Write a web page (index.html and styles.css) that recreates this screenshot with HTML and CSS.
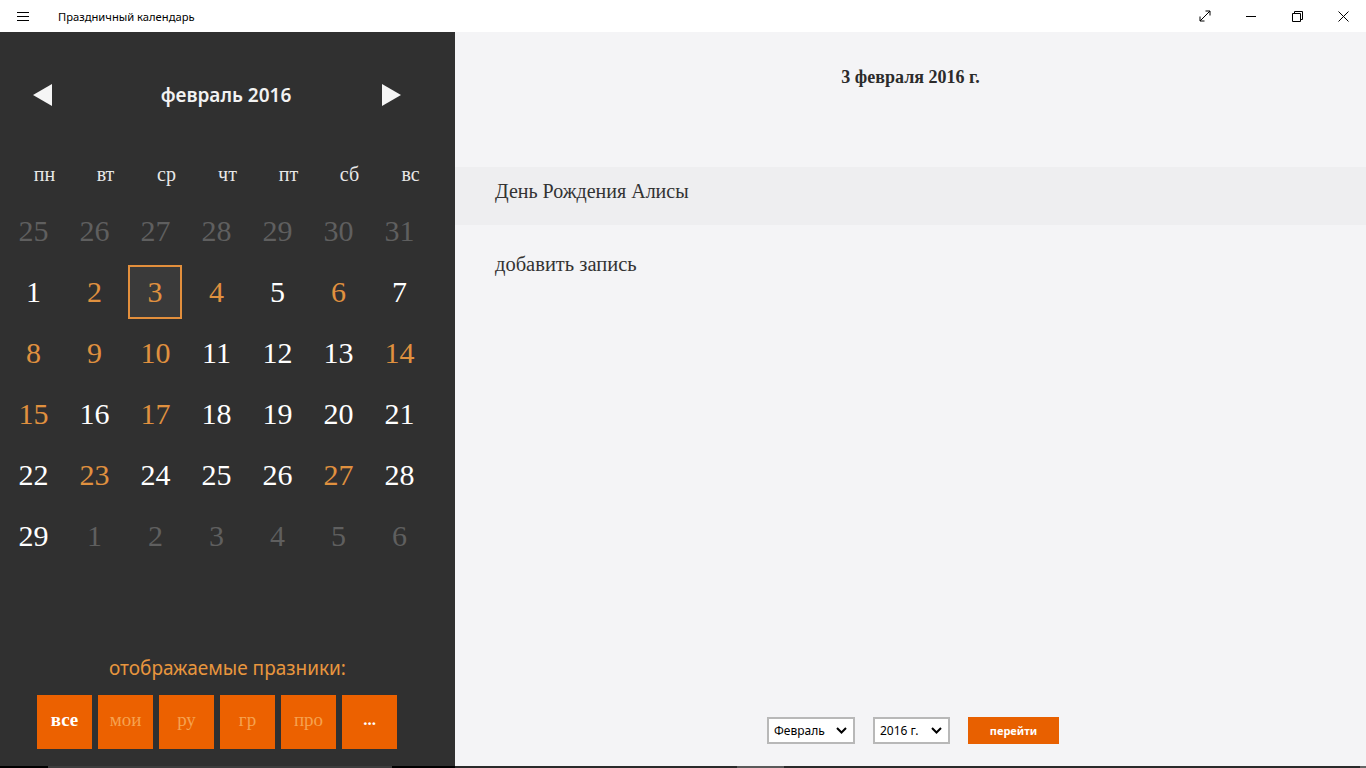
FILE: index.html
```html
<!DOCTYPE html>
<html lang="ru">
<head>
<meta charset="utf-8">
<title>Праздничный календарь</title>
<link rel="stylesheet" href="styles.css">
</head>
<body>
<div class="app">
  <header class="titlebar">
    <div class="hamburger"><span></span><span></span><span></span></div>
    <div class="app-title">Праздничный календарь</div>
    <div class="win-controls">
      <div class="wc">
        <svg width="12" height="12" viewBox="0 0 12 12"><path d="M1 11 L11 1 M6.5 1 H11 V5.5 M1 6.5 V11 H5.5" fill="none" stroke="#000" stroke-width="1"/></svg>
      </div>
      <div class="wc">
        <svg width="11" height="11" viewBox="0 0 11 11"><path d="M0 5.5 H10" stroke="#000" stroke-width="1"/></svg>
      </div>
      <div class="wc">
        <svg width="11" height="11" viewBox="0 0 11 11"><path d="M0.5 2.5 H8.5 V10.5 H0.5 Z M2.5 2.5 V0.5 H10.5 V8.5 H8.5" fill="none" stroke="#000" stroke-width="1"/></svg>
      </div>
      <div class="wc">
        <svg width="11" height="11" viewBox="0 0 11 11"><path d="M0.5 0.5 L10.5 10.5 M10.5 0.5 L0.5 10.5" stroke="#000" stroke-width="1"/></svg>
      </div>
    </div>
  </header>
  <main class="main">
    <aside class="cal">
      <div class="cal-head">
        <svg class="arrow" width="20" height="22" viewBox="0 0 20 22"><polygon points="19,0 19,22 0,11" fill="#f5f5f5"/></svg>
        <div class="month">февраль 2016</div>
        <svg class="arrow" width="20" height="22" viewBox="0 0 20 22"><polygon points="1,0 1,22 20,11" fill="#f5f5f5"/></svg>
      </div>
      <div class="weekdays">
        <span>пн</span><span>вт</span><span>ср</span><span>чт</span><span>пт</span><span>сб</span><span>вс</span>
      </div>
      <div class="days">
        <span class="d other">25</span><span class="d other">26</span><span class="d other">27</span><span class="d other">28</span><span class="d other">29</span><span class="d other">30</span><span class="d other">31</span>
        <span class="d">1</span><span class="d hol">2</span><span class="d hol cur">3</span><span class="d hol">4</span><span class="d">5</span><span class="d hol">6</span><span class="d">7</span>
        <span class="d hol">8</span><span class="d hol">9</span><span class="d hol">10</span><span class="d">11</span><span class="d">12</span><span class="d">13</span><span class="d hol">14</span>
        <span class="d hol">15</span><span class="d">16</span><span class="d hol">17</span><span class="d">18</span><span class="d">19</span><span class="d">20</span><span class="d">21</span>
        <span class="d">22</span><span class="d hol">23</span><span class="d">24</span><span class="d">25</span><span class="d">26</span><span class="d hol">27</span><span class="d">28</span>
        <span class="d">29</span><span class="d other">1</span><span class="d other">2</span><span class="d other">3</span><span class="d other">4</span><span class="d other">5</span><span class="d other">6</span>
      </div>
      <div class="filters">
        <div class="filters-label">отображаемые празники:</div>
        <div class="filter-btns">
          <button class="fb active">все</button>
          <button class="fb">мои</button>
          <button class="fb">ру</button>
          <button class="fb">гр</button>
          <button class="fb">про</button>
          <button class="fb more">...</button>
        </div>
      </div>
    </aside>
    <section class="day">
      <h1 class="day-title">3 февраля 2016 г.</h1>
      <div class="events">
        <div class="event">День Рождения Алисы</div>
        <div class="add">добавить запись</div>
      </div>
      <div class="goto">
        <div class="dd dd-month"><span>Февраль</span><svg width="11" height="7" viewBox="0 0 11 7"><polyline points="1,1 5.5,5.5 10,1" fill="none" stroke="#000" stroke-width="2"/></svg></div>
        <div class="dd dd-year"><span>2016 г.</span><svg width="11" height="7" viewBox="0 0 11 7"><polyline points="1,1 5.5,5.5 10,1" fill="none" stroke="#000" stroke-width="2"/></svg></div>
        <button class="go">перейти</button>
      </div>
    </section>
  </main>
  <div class="strip">
    <div class="strip-left">
      <span class="s-black s-a"></span><span class="s-grey s-b"></span><span class="s-black s-c"></span>
    </div>
    <div class="strip-right">
      <span class="s-dark s-d"></span><span class="s-thumb"></span><span class="s-dark s-e"></span><span class="s-end"></span>
    </div>
  </div>
</div>
</body>
</html>
```
FILE: styles.css
```css
* { box-sizing: border-box; margin: 0; padding: 0; }
html, body { width: 1366px; height: 768px; overflow: hidden; }
body { font-family: "Noto Sans", "Open Sans", sans-serif; background: #f4f4f6; color: #000; }

.app { display: flex; flex-direction: column; height: 768px; }

/* title bar */
.titlebar { height: 32px; flex: none; background: #fff; display: flex; align-items: center; }
.hamburger { width: 46px; height: 32px; display: flex; flex-direction: column; justify-content: center; align-items: center; gap: 3px; }
.hamburger span { display: block; width: 12px; height: 1px; background: #000; }
.app-title { margin-left: 12px; font-size: 11.2px; color: #000; }
.win-controls { margin-left: auto; display: flex; }
.wc { width: 46px; height: 32px; display: flex; align-items: center; justify-content: center; }

/* main */
.main { flex: 1; display: flex; min-height: 0; }

/* calendar panel */
.cal { width: 455px; flex: none; background: #303030; display: flex; flex-direction: column; }
.cal-head { margin-top: 43px; height: 40px; display: flex; align-items: center; padding: 0 54px 0 33px; }
.arrow { flex: none; display: block; }
.month { flex: 1; text-align: center; padding-left: 18px; font-size: 19px; font-weight: 600; color: #f2f2f2; }

.weekdays { margin-top: 45px; margin-left: 14px; height: 30px; display: grid; grid-template-columns: repeat(7, 61px); align-items: center; font-family: "Liberation Serif", serif; font-size: 20px; color: #e8e8e8; padding-bottom: 2px; }
.weekdays span { text-align: center; }

.days { margin-top: 10px; margin-left: 3px; display: grid; grid-template-columns: repeat(7, 61px); grid-auto-rows: 61px; font-family: "Liberation Serif", serif; font-size: 30px; color: #fff; }
.d { display: flex; align-items: center; justify-content: center; }
.d.other { color: #5f5f5f; }
.d.hol { color: #e0913f; }
.d.cur { margin: 4px 4px 3px 3px; border: 2px solid #e38f3c; background: #3a3a3a; }

.filters { margin-top: auto; padding-bottom: 17px; display: flex; flex-direction: column; }
.filters-label { text-align: center; font-size: 19px; line-height: 24px; color: #e8963e; margin-bottom: 15px; }
.filter-btns { display: flex; gap: 6px; padding-left: 37px; }
.fb { width: 55px; height: 54px; border: none; background: #ec6100; font-family: "Liberation Serif", serif; font-size: 19px; color: #f6a24f; padding-bottom: 5px; }
.fb.active { color: #fff; font-weight: bold; }
.fb.more { color: #fff; font-weight: bold; font-size: 17px; }

/* day panel */
.day { flex: 1; display: flex; flex-direction: column; background: #f4f4f6; }
.day-title { margin-top: 33px; text-align: center; font-family: "Liberation Serif", serif; font-weight: bold; font-size: 18px; line-height: 24px; color: #2b2b2b; }
.events { margin-top: 78px; }
.event { height: 58px; background: #eeeef0; padding: 0 0 9px 40px; display: flex; align-items: center; font-family: "Liberation Serif", serif; font-size: 20px; color: #333; }
.add { margin-top: 27px; padding-left: 40px; line-height: 24px; font-family: "Liberation Serif", serif; font-size: 20.5px; color: #333; }

.goto { margin-top: auto; margin-bottom: 22px; display: flex; justify-content: center; gap: 18px; padding-left: 5px; }
.dd { height: 27px; border: 2px solid #b8b8b8; background: #fff; display: flex; align-items: center; justify-content: space-between; padding: 0 6px 0 5px; font-size: 12px; color: #000; }
.dd-month { width: 88px; }
.dd-year { width: 77px; }
.go { width: 91px; height: 27px; border: none; background: #e86000; color: #fff; font-family: "Noto Sans", sans-serif; font-weight: bold; font-size: 11px; }

/* bottom strip */
.strip { height: 2px; flex: none; display: flex; }
.strip-left { width: 455px; display: flex; }
.strip-right { flex: 1; display: flex; }
.strip span { display: block; height: 2px; }
.s-black { background: #000; }
.s-grey { background: #3d3d3d; }
.s-dark { background: #2a2a2a; }
.s-a { width: 48px; }
.s-b { width: 344px; }
.s-c { flex: 1; }
.s-d { width: 282px; }
.s-thumb { width: 47px; background: #5a5a5a; }
.s-e { flex: 1; }
.s-end { width: 6px; background: #666; }
```
